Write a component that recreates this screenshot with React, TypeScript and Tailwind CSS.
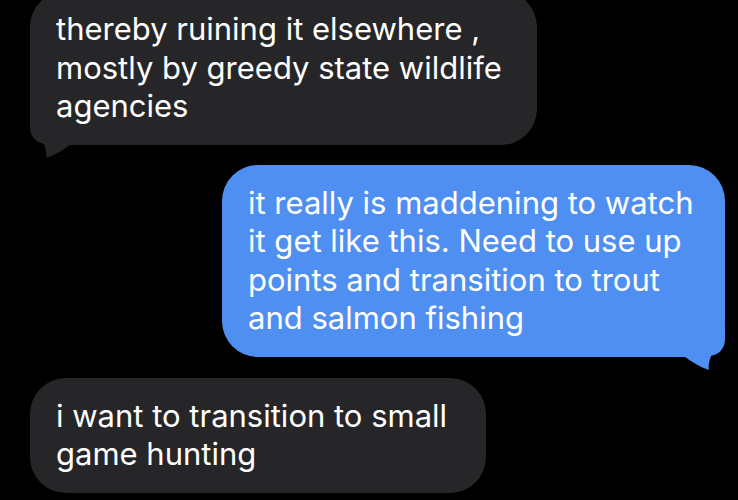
import React from 'react';

const Tail = ({ color, flip }: { color: string; flip?: boolean }) => (
  <svg
    width="46"
    height="48"
    viewBox="0 0 46 48"
    className={`absolute bottom-[-14px] ${flip ? 'right-0 scale-x-[-1]' : 'left-0'}`}
  >
    <path
      d="M0,0 L0,16 C0,26 6,31 14,33 C16,39 17,43 16,47 C25,44 33,39 40,34 L46,34 L46,0 Z"
      fill={color}
    />
  </svg>
);

const Bubble = ({
  lines,
  sent,
  tail,
  width,
  className = '',
}: {
  lines: string[];
  sent?: boolean;
  tail?: boolean;
  width: string;
  className?: string;
}) => (
  <div className={`relative ${width} ${sent ? 'self-end' : 'self-start'} ${className}`}>
    {tail && <Tail color={sent ? '#4f8ff1' : '#262629'} flip={sent} />}
    <div
      className={`relative rounded-[36px] px-[26px] py-[19px] text-[31px] leading-[38.5px] text-white ${
        sent ? 'bg-[#4f8ff1]' : 'bg-[#262629]'
      }`}
    >
      {lines.map((l, i) => (
        <div key={i} className="whitespace-nowrap">
          {l}
        </div>
      ))}
    </div>
  </div>
);

export default function App() {
  return (
    <div
      className="w-[738px] h-[500px] overflow-hidden bg-black flex flex-col pl-[30px] pr-[13px]"
      style={{ fontFamily: 'Inter, "Noto Sans", sans-serif' }}
    >
      <Bubble
        width="w-[507px]"
        className="mt-[-9px]"
        tail
        lines={['thereby ruining it elsewhere ,', 'mostly by greedy state wildlife', 'agencies']}
      />
      <Bubble
        width="w-[503px]"
        className="mt-[20px]"
        sent
        tail
        lines={[
          'it really is maddening to watch',
          'it get like this. Need to use up',
          'points and transition to trout',
          'and salmon fishing',
        ]}
      />
      <Bubble
        width="w-[456px]"
        className="mt-[21px]"
        lines={['i want to transition to small', 'game hunting']}
      />
    </div>
  );
}
